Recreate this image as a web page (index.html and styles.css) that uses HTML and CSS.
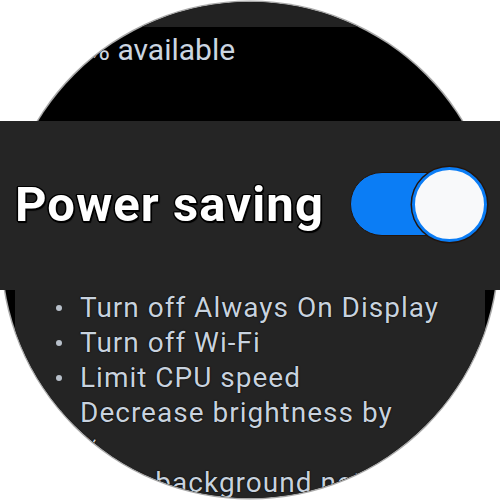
FILE: index.html
```html
<!DOCTYPE html>
<html>
<head>
<meta charset="utf-8">
<link rel="stylesheet" href="styles.css">
</head>
<body>
<div class="stage">
  <div class="watch">
    <div class="status"></div>
    <div class="avail">% available</div>
    <div class="gap"></div>
    <div class="card">
      <ul class="list">
        <li>Turn off Always On Display</li>
        <li>Turn off Wi-Fi</li>
        <li>Limit CPU speed</li>
        <li>Decrease brightness by</li>
        <li class="cont">%</li>
        <li>Limit background network usage</li>
      </ul>
    </div>
  </div>
  <div class="band">
    <span class="title">Power saving</span>
    <div class="toggle">
      <div class="track"></div>
      <div class="knob"></div>
    </div>
  </div>
</div>
</body>
</html>
```
FILE: styles.css
```css
html, body {
  margin: 0;
  padding: 0;
  background: #ffffff;
}
body {
  width: 500px;
  height: 500px;
  overflow: hidden;
  font-family: Roboto, "Liberation Sans", sans-serif;
}
.stage {
  position: relative;
  width: 500px;
  height: 500px;
  padding-top: 2px;
  box-sizing: border-box;
}
.watch {
  width: 496px;
  height: 496px;
  margin: 0 auto;
  border-radius: 50%;
  overflow: hidden;
  background: #000;
  box-shadow: 0 0 0 1.5px #a8a8a8;
  display: flex;
  flex-direction: column;
}
.status {
  height: 25px;
  flex: none;
  background: #222222;
}
.avail {
  flex: none;
  padding: 5px 0 0 86px;
  font-size: 30px;
  line-height: 36px;
  color: #cbd5e1;
  text-shadow: 0 0 1px #000;
}
.gap {
  height: 167px;
  flex: none;
}
.card {
  flex: 1;
  margin: 0 13px;
  background: #242424;
  padding-top: 55px;
}
.list {
  list-style: none;
  margin: 0;
  padding: 0 0 0 65px;
  font-size: 28px;
  line-height: 35px;
  letter-spacing: 1px;
  color: #c8d2de;
  text-shadow: 0 0 1.5px #000, 0 0 1px #000;
  white-space: nowrap;
}
.list li {
  position: relative;
}
.list li::before {
  content: "";
  position: absolute;
  left: -24px;
  top: 15px;
  width: 6px;
  height: 6px;
  border-radius: 50%;
  background: #b8c0ca;
}
.list li.cont::before {
  display: none;
}
.band {
  position: absolute;
  left: 0;
  top: 121px;
  width: 500px;
  height: 169px;
  background: #252525;
  display: flex;
  align-items: center;
  justify-content: space-between;
  padding: 0 13px 0 15px;
  box-sizing: border-box;
}
.title {
  font-size: 49px;
  font-weight: 700;
  letter-spacing: 1.1px;
  color: #ffffff;
  line-height: 1;
  margin-top: -3px;
  text-shadow:
    1.5px 0 0 #000, -1.5px 0 0 #000, 0 1.5px 0 #000, 0 -1.5px 0 #000,
    1px 1px 0 #000, -1px -1px 0 #000, 1px -1px 0 #000, -1px 1px 0 #000,
    1.5px 1.5px 1px #000;
}
.toggle {
  display: flex;
  align-items: center;
  margin-top: -3px;
}
.track {
  width: 122px;
  height: 62px;
  border-radius: 32px;
  background: #0b7df5;
  border: 1.5px solid #24150c;
}
.knob {
  width: 69px;
  height: 69px;
  margin-left: -62px;
  border-radius: 50%;
  background: #f8f9fa;
  border: 3.5px solid #0b7df5;
  box-shadow: 0 0 0 1.5px #24150c;
}
```
